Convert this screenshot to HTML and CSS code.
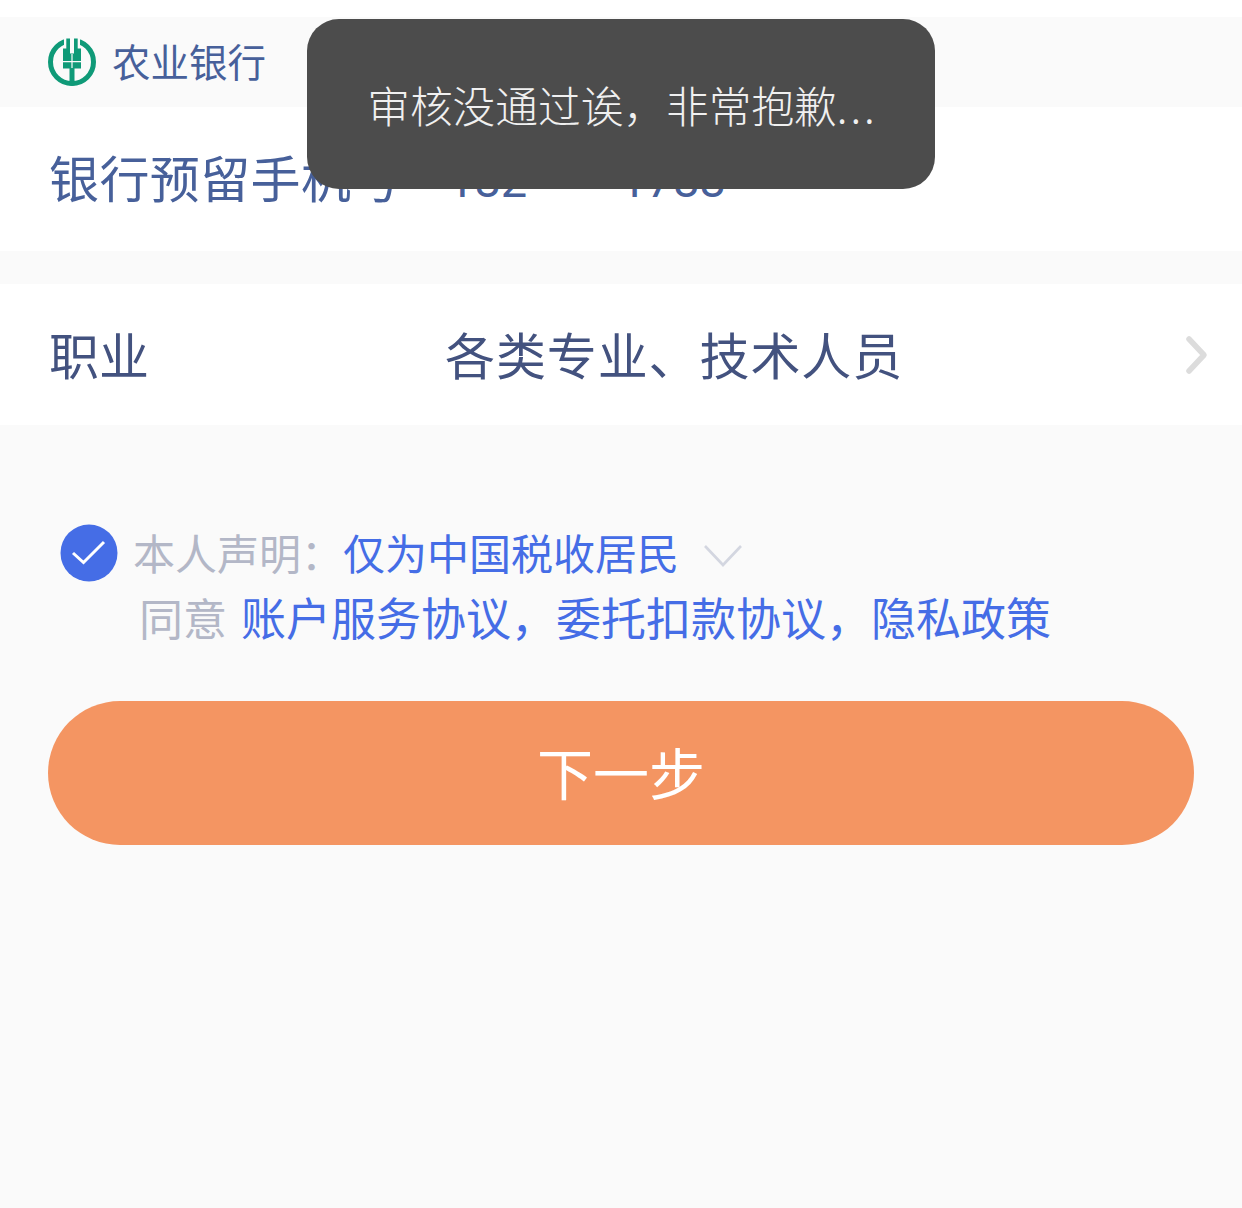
FILE: index.html
```html
<!DOCTYPE html>
<html lang="zh-CN">
<head>
    <meta charset="UTF-8">
    <meta name="viewport" content="width=device-width, initial-scale=1.0">
    <title>农业银行</title>
    <link rel="stylesheet" href="styles.css">
</head>
<body>
    <div class="toast">审核没通过诶，非常抱歉<span class="dots">...</span></div>

    <div class="bank-bar">
        <svg class="bank-logo" viewBox="0 0 48 48">
            <circle cx="24" cy="24" r="21.5" fill="none" stroke="#0f9a78" stroke-width="5"/>
            <path d="M16 0h16v11h-16z" fill="#fafafa"/>
            <path d="M18.3 0.5h3.7v15h4v-15h3.7v10h3.3v20h-6.5v17h-5v-17h-6.5v-20h3.3z" fill="#0f9a78"/>
            <path d="M15 23h18v1.2H15zM23.4 16h1.2v14h-1.2z" fill="#fafafa"/>
        </svg>
        <span class="bank-name">农业银行</span>
    </div>

    <div class="row row-phone">
        <span class="row-label">银行预留手机号</span>
        <span class="row-phone-num">182<span class="mask"></span>1788</span>
    </div>

    <div class="row row-job">
        <span class="row-label">职业</span>
        <span class="row-value">各类专业、技术人员</span>
        <svg class="chevron" viewBox="0 0 24 40">
            <path d="M4 4l15 16L4 36" fill="none" stroke="#dcdcdc" stroke-width="5.5" stroke-linecap="round" stroke-linejoin="round"/>
        </svg>
    </div>

    <div class="agree">
        <div class="agree-line">
            <svg class="check" viewBox="0 0 58 58">
                <circle cx="29" cy="29" r="28.5" fill="#456de6"/>
                <path d="M13 29l10.5 9.5L44 18" fill="none" stroke="#fff" stroke-width="3"/>
            </svg>
            <span class="muted">本人声明：</span>
            <span class="link">仅为中国税收居民</span>
            <svg class="caret" viewBox="0 0 38 24">
                <path d="M1 2l18 19L37 2" fill="none" stroke="#d3d6e0" stroke-width="2.6"/>
            </svg>
        </div>
        <div class="agree-terms">
            <span class="muted">同意</span>
            <span class="link">账户服务协议，委托扣款协议，隐私政策</span>
        </div>
    </div>

    <div class="next-wrap">
        <div class="next-btn">下一步</div>
    </div>
</body>
</html>
```

FILE: styles.css
```css
body {
    font-family: "Noto Sans CJK SC", "Liberation Sans", sans-serif;
    background: #fafafa;
    margin: 0;
    padding: 17px 0 0;
    min-height: 1191px;
    box-shadow: inset 0 17px 0 #fff;
    color: #43527f;
    position: relative;
    overflow: hidden;
}

.toast {
    position: absolute;
    left: 307px;
    top: 19px;
    width: 628px;
    height: 170px;
    box-sizing: border-box;
    padding-left: 3px;
    border-radius: 32px;
    background: #4c4c4c;
    color: #f0f0f0;
    font-size: 42.7px;
    font-weight: 300;
    display: flex;
    align-items: center;
    justify-content: center;
}

.dots {
    letter-spacing: 3px;
}

.bank-bar {
    height: 90px;
    display: flex;
    align-items: center;
    padding-left: 48px;
}

.bank-logo {
    width: 48px;
    height: 48px;
    margin-right: 16px;
}

.bank-name {
    font-size: 38.5px;
    color: #47609a;
    margin-bottom: 4px;
}

.row {
    background: #fff;
    display: flex;
    align-items: center;
    font-size: 50px;
    padding-left: 49px;
    white-space: nowrap;
}

.row-phone {
    height: 144px;
    margin-bottom: 33px;
    color: #47609a;
    padding-bottom: 6px;
    box-sizing: border-box;
}

.row-phone .row-label {
    letter-spacing: 0.4px;
}

.row-phone-num {
    margin-left: 46px;
    margin-top: 8px;
    font-family: Roboto, sans-serif;
    font-size: 47px;
    display: flex;
}

.mask {
    width: 93px;
}

.row-job {
    height: 141px;
    padding-bottom: 4px;
    box-sizing: border-box;
    position: relative;
}

.row-label {
    flex: none;
}

.row-job .row-label {
    width: 396px;
}

.row-value {
    letter-spacing: 0.9px;
}

.chevron {
    position: absolute;
    right: 33px;
    top: 51px;
    width: 24px;
    height: 40px;
}

.agree {
    padding: 99px 0 0 60px;
}

.agree-line {
    display: flex;
    align-items: center;
    height: 58px;
    font-size: 42px;
}

.agree-line span {
    margin-bottom: 4px;
}

.check {
    width: 58px;
    height: 58px;
    margin-right: 15px;
    margin-top: -1px;
}

.muted {
    color: #b3b7c7;
}

.link {
    color: #456de6;
}

.agree-line .muted {
    width: 210px;
}

.caret {
    width: 38px;
    height: 24px;
    margin-left: 25px;
    margin-top: 6px;
}

.agree-terms {
    margin-top: 2px;
    padding-left: 79px;
    font-size: 45px;
    line-height: 66px;
    white-space: nowrap;
}

.agree-terms .muted {
    font-size: 44px;
    margin-right: 4px;
}

.next-wrap {
    padding: 51px 48px 0;
}

.next-btn {
    height: 144px;
    border-radius: 72px;
    background: #f49562;
    color: #fff;
    font-size: 56px;
    padding-bottom: 6px;
    box-sizing: border-box;
    display: flex;
    align-items: center;
    justify-content: center;
}
```
